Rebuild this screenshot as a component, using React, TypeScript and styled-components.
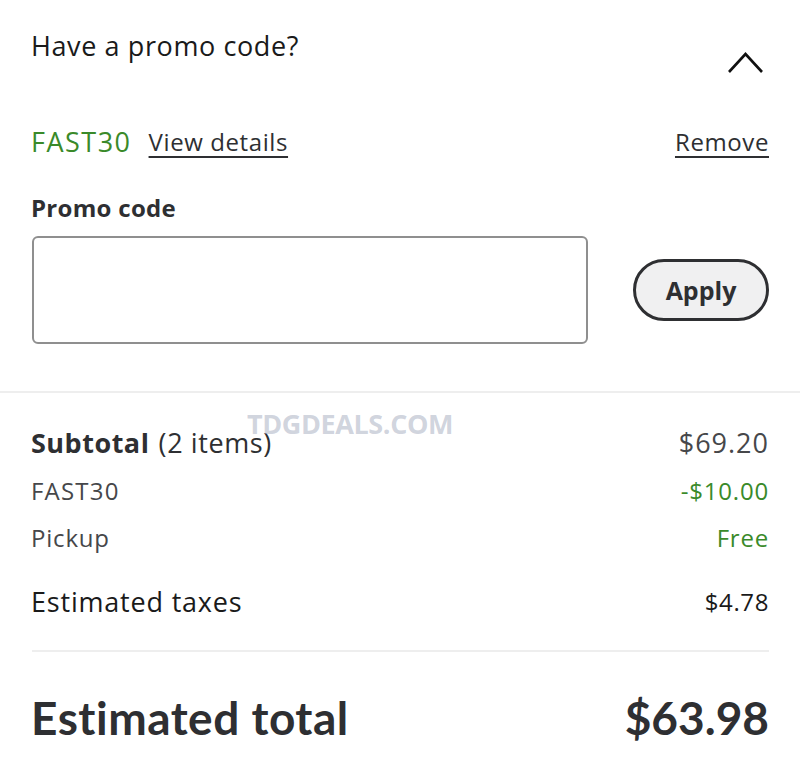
import React from "react";
import styled, { createGlobalStyle } from "styled-components";

const Global = createGlobalStyle`
  html, body { margin: 0; padding: 0; background: #fff; }
  body { font-family: "Open Sans", Lato, sans-serif; color: #2e2f32; }
`;

const Page = styled.div`
  position: relative;
  width: 800px;
  height: 781px;
  overflow: hidden;
  background: #fff;
`;

const Section = styled.div`
  padding: 0 31px 0 31px;
  display: flex;
  flex-direction: column;
`;

const Header = styled.div`
  display: flex;
  justify-content: space-between;
  align-items: flex-start;
  height: 125px;
`;

const Title = styled.div`
  margin-top: 30px;
  font-size: 27px;
  letter-spacing: 0.6px;
  line-height: 32px;
  color: #1a1a1a;
`;

const Chevron = styled.svg`
  margin-top: 52px;
  margin-right: 5px;
`;

const PromoRow = styled.div`
  display: flex;
  align-items: center;
  height: 32px;
`;

const Code = styled.span`
  font-size: 27px;
  letter-spacing: 1.5px;
  color: #3a8a2a;
  margin-right: 17px;
`;

const LinkText = styled.a<{ $push?: boolean }>`
  font-size: 24px;
  letter-spacing: 0.6px;
  color: #2e2f32;
  text-decoration: underline;
  text-underline-offset: 5px;
  text-decoration-thickness: 2px;
  margin-left: ${(p) => (p.$push ? "auto" : "0")};
  cursor: pointer;
`;

const Label = styled.div`
  margin-top: 35px;
  font-size: 24px;
  font-weight: 700;
  letter-spacing: 0.3px;
  line-height: 32px;
  color: #2e2f32;
`;

const InputRow = styled.div`
  margin-top: 12px;
  display: flex;
  align-items: center;
  justify-content: space-between;
`;

const Input = styled.input`
  box-sizing: border-box;
  width: 556px;
  height: 108px;
  margin-left: 1px;
  border: 2px solid #8f8f8f;
  border-radius: 6px;
  background: #fff;
  font-family: inherit;
  font-size: 24px;
  padding: 0 16px;
  outline: none;
`;

const ApplyButton = styled.button`
  box-sizing: border-box;
  width: 136px;
  height: 62px;
  border: 3px solid #2e2f32;
  border-radius: 31px;
  background: #f0f0f1;
  font-family: "Open Sans", sans-serif;
  font-size: 25px;
  font-weight: 700;
  color: #2e2f32;
  padding: 0;
`;

const Divider = styled.div`
  height: 2px;
  background: #eeeeee;
`;

const InsetDivider = styled(Divider)`
  margin-left: 1px;
`;

const Row = styled.div<{ $h: number }>`
  display: flex;
  justify-content: space-between;
  align-items: center;
  height: ${(p) => p.$h}px;
`;

const Text = styled.span<{ $size: number; $color?: string; $bold?: boolean; $ls?: number; $mr?: number }>`
  font-size: ${(p) => p.$size}px;
  color: ${(p) => p.$color || "#2e2f32"};
  font-weight: ${(p) => (p.$bold ? 700 : 400)};
  letter-spacing: ${(p) => p.$ls ?? 0}px;
  margin-right: ${(p) => p.$mr ?? 0}px;
`;

const TotalText = styled.span<{ $ls?: number }>`
  font-family: Lato, sans-serif;
  font-size: 46px;
  font-weight: 700;
  color: #2e2f32;
  letter-spacing: ${(p) => p.$ls ?? 0}px;
`;

const Watermark = styled.div`
  position: absolute;
  left: 247px;
  top: 405px;
  font-family: "Open Sans", Lato, sans-serif;
  font-weight: 700;
  font-size: 27px;
  color: rgba(170, 176, 194, 0.55);
  letter-spacing: -0.4px;
  pointer-events: none;
`;

const Gap = styled.div<{ $h: number }>`
  height: ${(p) => p.$h}px;
`;

export default function App() {
  return (
    <Page>
      <Global />
      <Section>
        <Header>
          <Title>Have a promo code?</Title>
          <Chevron width="37" height="22" viewBox="0 0 37 22">
            <polyline
              points="2,20 18.5,2 35,20"
              fill="none"
              stroke="#111"
              strokeWidth="2.6"
            />
          </Chevron>
        </Header>
        <PromoRow>
          <Code>FAST30</Code>
          <LinkText>View details</LinkText>
          <LinkText $push>Remove</LinkText>
        </PromoRow>
        <Label>Promo code</Label>
        <InputRow>
          <Input aria-label="Promo code" />
          <ApplyButton>Apply</ApplyButton>
        </InputRow>
        <Gap $h={47} />
      </Section>
      <Divider />
      <Section>
        <Gap $h={33} />
        <Row $h={32}>
          <span>
            <Text $size={27} $bold $ls={0.5} $mr={5}>Subtotal</Text>{" "}
            <Text $size={27} $ls={0.6}>(2 items)</Text>
          </span>
          <Text $size={27} $ls={1} $color="#46474a">$69.20</Text>
        </Row>
        <Gap $h={16} />
        <Row $h={32}>
          <Text $size={24} $ls={1.2} $color="#46474a">FAST30</Text>
          <Text $size={24} $ls={0.8} $color="#3a8a2a">-$10.00</Text>
        </Row>
        <Gap $h={15} />
        <Row $h={32}>
          <Text $size={24} $ls={0.8} $color="#46474a">Pickup</Text>
          <Text $size={24} $ls={0.8} $color="#3a8a2a">Free</Text>
        </Row>
        <Gap $h={32} />
        <Row $h={32}>
          <Text $size={27} $ls={0.8} $color="#1a1a1a">Estimated taxes</Text>
          <Text $size={24} $ls={0.6} $color="#1a1a1a">$4.78</Text>
        </Row>
        <Gap $h={33} />
        <InsetDivider />
        <Gap $h={41} />
        <Row $h={48}>
          <TotalText $ls={0.5}>Estimated total</TotalText>
          <TotalText>$63.98</TotalText>
        </Row>
      </Section>
      <Watermark>TDGDEALS.COM</Watermark>
    </Page>
  );
}
